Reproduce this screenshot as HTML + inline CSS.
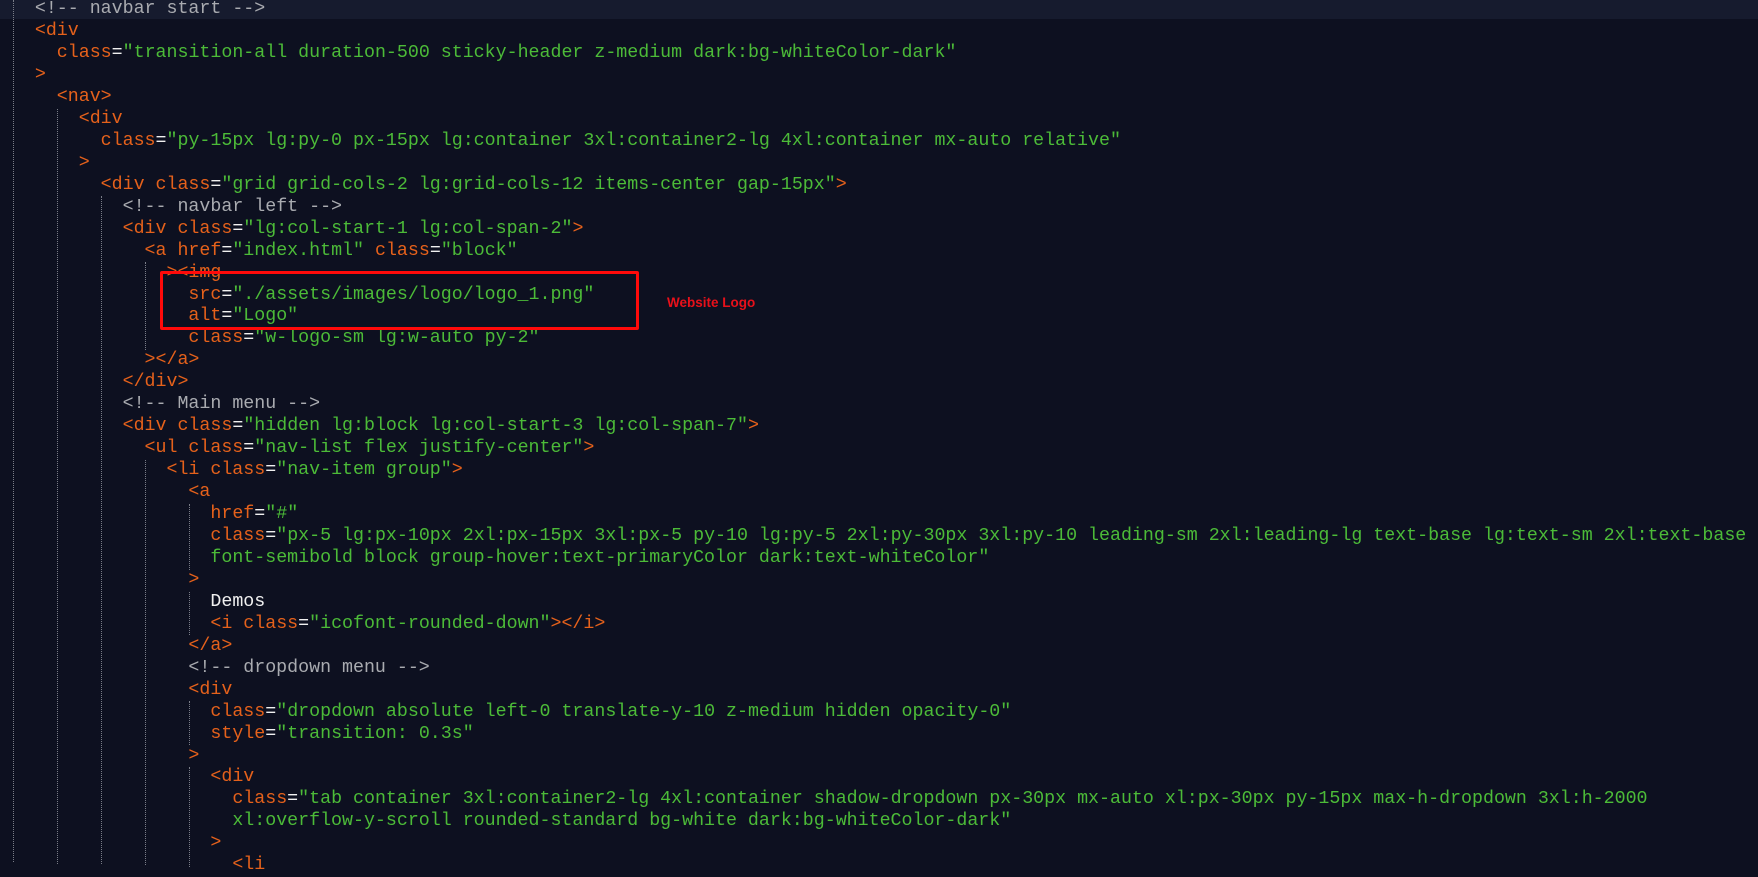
<!DOCTYPE html>
<html><head><meta charset="utf-8">
<style>
html,body{margin:0;padding:0;width:1758px;height:862px;overflow:hidden;background:#0d1020;}
.hl{position:absolute;left:0;top:0;width:1758px;height:19px;background:#161b2e;}
pre{position:absolute;left:12.9px;top:-0.9px;margin:0;font-family:"Liberation Mono",monospace;font-size:18.3px;line-height:21.95px;color:#e8e8e8;white-space:pre;}
.t{color:#e5611b}.s{color:#4cbb38}.c{color:#a9abb0}.w{color:#f0f0f0}
.g{position:absolute;width:0;border-left:1px dotted #7a7d88;}
.box{position:absolute;left:160px;top:271px;width:473px;height:53px;border:3px solid #ff0a0a;border-radius:2px;}
.lbl{position:absolute;left:667px;top:295px;font-family:"Liberation Sans",sans-serif;font-weight:bold;font-size:13.5px;color:#e8101a;}
</style></head><body>
<div class="hl"></div>
<div class="g" style="left:12.5px;top:0;height:862px"></div>
<div class="g" style="left:56.5px;top:108.6px;height:755px"></div>
<div class="g" style="left:100.5px;top:196.4px;height:668px"></div>
<div class="g" style="left:144.5px;top:262.2px;height:87.8px"></div>
<div class="g" style="left:144.5px;top:459.8px;height:405px"></div>
<div class="g" style="left:188.5px;top:503.7px;height:65.9px"></div>
<div class="g" style="left:188.5px;top:591.5px;height:43.9px"></div>
<div class="g" style="left:188.5px;top:701.2px;height:43.9px"></div>
<div class="g" style="left:188.5px;top:767.1px;height:100px"></div>
<pre>  <span class="c">&lt;!-- navbar start --&gt;</span>
  <span class="t">&lt;div</span>
    <span class="t">class</span><span class="w">=</span><span class="s">"transition-all duration-500 sticky-header z-medium dark:bg-whiteColor-dark"</span>
  <span class="t">&gt;</span>
    <span class="t">&lt;nav&gt;</span>
      <span class="t">&lt;div</span>
        <span class="t">class</span><span class="w">=</span><span class="s">"py-15px lg:py-0 px-15px lg:container 3xl:container2-lg 4xl:container mx-auto relative"</span>
      <span class="t">&gt;</span>
        <span class="t">&lt;div class</span><span class="w">=</span><span class="s">"grid grid-cols-2 lg:grid-cols-12 items-center gap-15px"</span><span class="t">&gt;</span>
          <span class="c">&lt;!-- navbar left --&gt;</span>
          <span class="t">&lt;div class</span><span class="w">=</span><span class="s">"lg:col-start-1 lg:col-span-2"</span><span class="t">&gt;</span>
            <span class="t">&lt;a href</span><span class="w">=</span><span class="s">"index.html"</span> <span class="t">class</span><span class="w">=</span><span class="s">"block"</span>
              <span class="t">&gt;&lt;img</span>
                <span class="t">src</span><span class="w">=</span><span class="s">"./assets/images/logo/logo_1.png"</span>
                <span class="t">alt</span><span class="w">=</span><span class="s">"Logo"</span>
                <span class="t">class</span><span class="w">=</span><span class="s">"w-logo-sm lg:w-auto py-2"</span>
            <span class="t">&gt;&lt;/a&gt;</span>
          <span class="t">&lt;/div&gt;</span>
          <span class="c">&lt;!-- Main menu --&gt;</span>
          <span class="t">&lt;div class</span><span class="w">=</span><span class="s">"hidden lg:block lg:col-start-3 lg:col-span-7"</span><span class="t">&gt;</span>
            <span class="t">&lt;ul class</span><span class="w">=</span><span class="s">"nav-list flex justify-center"</span><span class="t">&gt;</span>
              <span class="t">&lt;li class</span><span class="w">=</span><span class="s">"nav-item group"</span><span class="t">&gt;</span>
                <span class="t">&lt;a</span>
                  <span class="t">href</span><span class="w">=</span><span class="s">"#"</span>
                  <span class="t">class</span><span class="w">=</span><span class="s">"px-5 lg:px-10px 2xl:px-15px 3xl:px-5 py-10 lg:py-5 2xl:py-30px 3xl:py-10 leading-sm 2xl:leading-lg text-base lg:text-sm 2xl:text-base</span>
                  <span class="s">font-semibold block group-hover:text-primaryColor dark:text-whiteColor"</span>
                <span class="t">&gt;</span>
                  <span class="w">Demos</span>
                  <span class="t">&lt;i class</span><span class="w">=</span><span class="s">"icofont-rounded-down"</span><span class="t">&gt;&lt;/i&gt;</span>
                <span class="t">&lt;/a&gt;</span>
                <span class="c">&lt;!-- dropdown menu --&gt;</span>
                <span class="t">&lt;div</span>
                  <span class="t">class</span><span class="w">=</span><span class="s">"dropdown absolute left-0 translate-y-10 z-medium hidden opacity-0"</span>
                  <span class="t">style</span><span class="w">=</span><span class="s">"transition: 0.3s"</span>
                <span class="t">&gt;</span>
                  <span class="t">&lt;div</span>
                    <span class="t">class</span><span class="w">=</span><span class="s">"tab container 3xl:container2-lg 4xl:container shadow-dropdown px-30px mx-auto xl:px-30px py-15px max-h-dropdown 3xl:h-2000</span>
                    <span class="s">xl:overflow-y-scroll rounded-standard bg-white dark:bg-whiteColor-dark"</span>
                  <span class="t">&gt;</span>
                    <span class="t">&lt;li</span>
</pre>
<div class="box"></div>
<div class="lbl">Website Logo</div>
</body></html>
